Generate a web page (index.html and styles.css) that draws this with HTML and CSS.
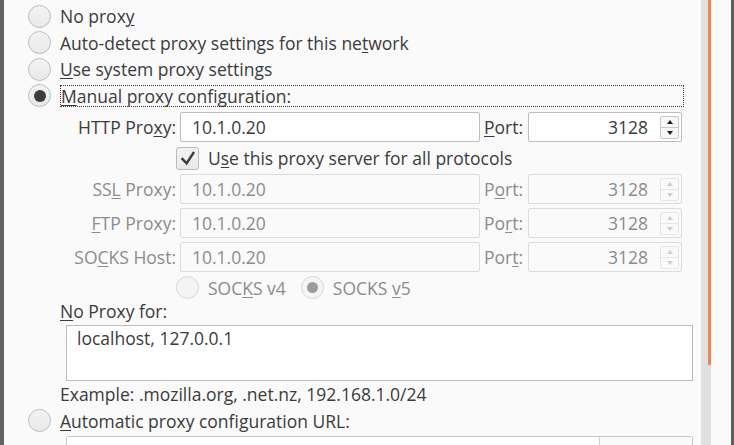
FILE: index.html
```html
<!DOCTYPE html>
<html>
<head>
<meta charset="utf-8">
<title>Connection Settings</title>
<link rel="stylesheet" href="styles.css">
</head>
<body>
<div class="screen">
  <div class="edge-left"></div>
  <main class="panel">
    <div class="modes">
      <div class="radio-row"><span class="radio"></span><span class="label">No prox<u>y</u></span></div>
      <div class="radio-row"><span class="radio"></span><span class="label">Auto-detect proxy settings for this ne<u>t</u>work</span></div>
      <div class="radio-row"><span class="radio"></span><span class="label"><u>U</u>se system proxy settings</span></div>
      <div class="radio-row"><span class="radio checked"></span><span class="label focus"><u>M</u>anual proxy configuration:</span></div>
    </div>

    <div class="proxy-grid">
      <span class="field-label">HTTP Pro<u>x</u>y:</span>
      <div class="entry">10.1.0.20</div>
      <span class="port-label"><u>P</u>ort:</span>
      <div class="spin">
        <span class="spin-value">3128</span>
        <span class="stepper"><span class="step up"></span><span class="step down"></span></span>
      </div>

      <div class="check-row">
        <span class="checkbox"><svg width="21" height="21" viewBox="0 0 21 21"><path d="M4.6 10.2 L9.6 15.4 L17 4" fill="none" stroke="#3c3c3c" stroke-width="2.4" stroke-linecap="butt" stroke-linejoin="miter"/></svg></span>
        <span>U<u>s</u>e this proxy server for all protocols</span>
      </div>

      <span class="field-label disabled">SS<u>L</u> Proxy:</span>
      <div class="entry disabled">10.1.0.20</div>
      <span class="port-label disabled">P<u>o</u>rt:</span>
      <div class="spin disabled">
        <span class="spin-value">3128</span>
        <span class="stepper"><span class="step up"></span><span class="step down"></span></span>
      </div>

      <span class="field-label disabled"><u>F</u>TP Proxy:</span>
      <div class="entry disabled">10.1.0.20</div>
      <span class="port-label disabled">Po<u>r</u>t:</span>
      <div class="spin disabled">
        <span class="spin-value">3128</span>
        <span class="stepper"><span class="step up"></span><span class="step down"></span></span>
      </div>

      <span class="field-label disabled">SO<u>C</u>KS Host:</span>
      <div class="entry disabled">10.1.0.20</div>
      <span class="port-label disabled">Por<u>t</u>:</span>
      <div class="spin disabled">
        <span class="spin-value">3128</span>
        <span class="stepper"><span class="step up"></span><span class="step down"></span></span>
      </div>

      <div class="socks-row">
        <span class="radio disabled"></span><span class="socks-label">SOC<u>K</u>S v4</span>
        <span class="radio disabled checked"></span><span>SOCKS <u>v</u>5</span>
      </div>
    </div>

    <div class="noproxy">
      <div class="np-label"><u>N</u>o Proxy for:</div>
      <div class="textarea">localhost, 127.0.0.1</div>
      <div class="example">Example: .mozilla.org, .net.nz, 192.168.1.0/24</div>
    </div>

    <div class="radio-row auto"><span class="radio"></span><span class="label"><u>A</u>utomatic proxy configuration URL:</span></div>

    <div class="url-row">
      <div class="url-entry"></div>
      <div class="reload">Reload</div>
    </div>
  </main>
  <div class="scroll"><div class="thumb"></div></div>
  <div class="gutter"></div>
  <div class="edge-right"></div>
</div>
</body>
</html>
```

FILE: styles.css
```css
html, body {
  margin: 0;
  padding: 0;
  overflow: hidden;
}

body {
  width: 734px;
  height: 445px;
  background: #fafafa;
  color: #3c3c3c;
  font-family: "Open Sans", "Noto Sans", sans-serif;
  font-size: 17.5px;
  line-height: 24px;
}

u {
  text-decoration-thickness: 1px;
  text-underline-offset: 2px;
}

.screen {
  display: flex;
  height: 445px;
}

.edge-left {
  flex: none;
  width: 4px;
  background: #626262;
}

.panel {
  flex: none;
  width: 697px;
  box-sizing: border-box;
  padding-top: 3px;
  background: #fafafa;
}

.scroll {
  flex: none;
  width: 10px;
  background: #e0e0e0;
  display: flex;
  justify-content: flex-end;
}

.thumb {
  width: 3px;
  height: 365px;
  background: #ee8656;
}

.gutter {
  flex: none;
  width: 20px;
  background: #fafafa;
}

.edge-right {
  flex: none;
  width: 3px;
  background: #5e5e5e;
}

/* radio rows */
.radio-row {
  height: 26.5px;
  display: flex;
  align-items: center;
  padding-left: 24px;
  white-space: nowrap;
}

.radio {
  flex: none;
  width: 23px;
  height: 23px;
  box-sizing: border-box;
  border: 1px solid #bcbcbc;
  border-radius: 50%;
  background: linear-gradient(#f3f3f3, #e9e9e9);
  display: flex;
  align-items: center;
  justify-content: center;
  margin-right: 9px;
}

.radio.checked::after {
  content: "";
  width: 12px;
  height: 12px;
  border-radius: 50%;
  background: #3c3c3c;
}

.radio.disabled {
  border-color: #d8d8d8;
  background: #f4f4f4;
}

.radio.disabled.checked::after {
  width: 11px;
  height: 11px;
  background: #9c9c9c;
}

.focus {
  width: 624px;
  height: 22px;
  box-sizing: border-box;
  border: 1px dotted #3c3c3c;
  display: flex;
  align-items: center;
}

/* proxy grid */
.proxy-grid {
  display: grid;
  grid-template-columns: 172px 300px 40px 154px;
  grid-template-rows: 30px 24px 30px 30px 30px 23px;
  column-gap: 4px;
  row-gap: 4px;
  margin-top: 3px;
  align-items: center;
  white-space: nowrap;
}

.field-label {
  text-align: right;
}

.disabled {
  color: #8c8c8c;
}

.entry {
  height: 30px;
  box-sizing: border-box;
  border: 1px solid #bdbdbd;
  border-radius: 2px;
  background: #ffffff;
  padding-left: 11px;
  display: flex;
  align-items: center;
}

.entry.disabled,
.spin.disabled {
  background: #fafafa;
  border-color: #dcdcdc;
}

.spin {
  height: 30px;
  box-sizing: border-box;
  border: 1px solid #bdbdbd;
  border-radius: 2px;
  background: #ffffff;
  display: flex;
  align-items: center;
}

.spin-value {
  flex: 1;
  text-align: right;
  margin-right: 12px;
}

.stepper {
  flex: none;
  width: 19px;
  height: 23px;
  box-sizing: border-box;
  margin-right: 2px;
  border: 1px solid #c8c8c8;
  border-radius: 2px;
  background: #f7f7f7;
  display: flex;
  flex-direction: column;
}

.step {
  flex: 1;
  display: flex;
  align-items: center;
  justify-content: center;
}

.step.up {
  border-bottom: 1px solid #c8c8c8;
}

.step.up::after {
  content: "";
  border-left: 3px solid transparent;
  border-right: 3px solid transparent;
  border-bottom: 4px solid #1e1e1e;
}

.step.down::after {
  content: "";
  border-left: 3px solid transparent;
  border-right: 3px solid transparent;
  border-top: 4px solid #1e1e1e;
}

.spin.disabled .stepper {
  border-color: #e6e6e6;
  background: #fafafa;
}

.spin.disabled .step.up {
  border-bottom-color: #e6e6e6;
}

.spin.disabled .step.up::after {
  border-bottom-color: #cfcfcf;
}

.spin.disabled .step.down::after {
  border-top-color: #cfcfcf;
}

.check-row {
  grid-column: 2 / 5;
  margin-left: -4px;
  display: flex;
  align-items: center;
}

.checkbox {
  flex: none;
  width: 23px;
  height: 23px;
  box-sizing: border-box;
  border: 1px solid #bcbcbc;
  border-radius: 3px;
  background: linear-gradient(#f3f3f3, #e9e9e9);
  margin-right: 9px;
  display: flex;
}

.socks-row {
  grid-column: 2 / 5;
  margin-left: -4px;
  display: flex;
  align-items: center;
  color: #8c8c8c;
}

.socks-label {
  margin-right: 15px;
}

/* no proxy */
.noproxy {
  padding-left: 56px;
  white-space: nowrap;
}

.np-label {
  height: 24px;
}

.textarea {
  margin: 2px 0 0 6px;
  width: 627px;
  height: 56px;
  box-sizing: border-box;
  border: 1px solid #bdbdbd;
  background: #ffffff;
  padding: 0 10px;
}

.example {
  margin-top: 1px;
}

.radio-row.auto {
  margin-top: 1.5px;
}

.url-row {
  margin: 2px 0 0 62px;
  width: 627px;
  height: 30px;
  box-sizing: border-box;
  border: 1px solid #c8c8c8;
  border-radius: 2px;
  display: flex;
}

.url-entry {
  flex: 1;
  background: #ffffff;
  border-right: 1px solid #d0d0d0;
}

.reload {
  flex: none;
  width: 92px;
  text-align: center;
  background: #fafafa;
  padding-top: 5px;
}
```
